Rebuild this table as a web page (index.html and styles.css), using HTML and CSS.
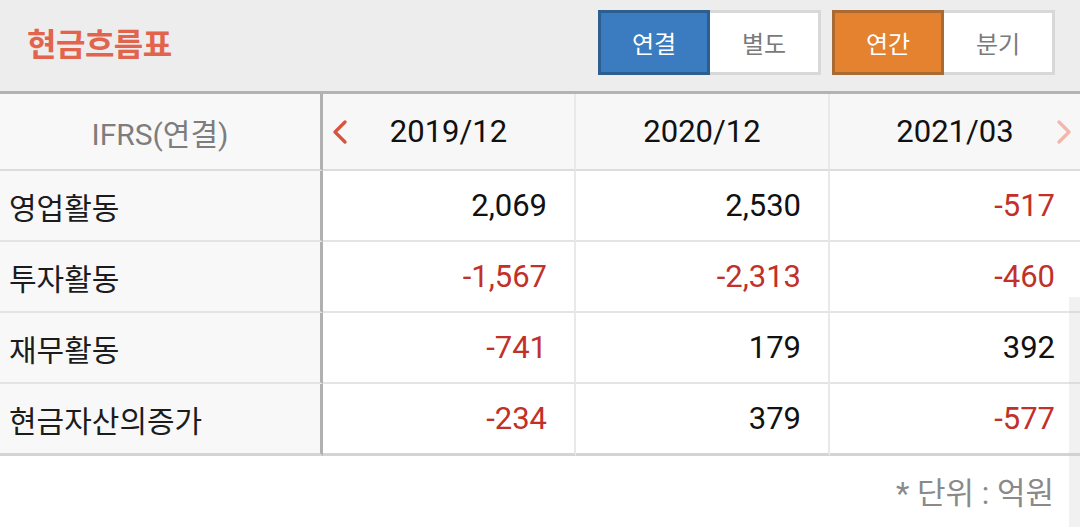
FILE: index.html
```html
<!DOCTYPE html>
<html lang="ko">
<head>
<meta charset="utf-8">
<title>현금흐름표</title>
<link rel="stylesheet" href="styles.css">
</head>
<body>
<div class="page">
  <header class="top">
    <h1 class="title">현금흐름표</h1>
    <div class="toggles">
      <div class="seg">
        <span class="btn btn-blue">연결</span>
        <span class="btn btn-off">별도</span>
      </div>
      <div class="seg">
        <span class="btn btn-orange">연간</span>
        <span class="btn btn-off">분기</span>
      </div>
    </div>
  </header>

  <div class="grid">
    <div class="cell head label-col ifrs">IFRS(연결)</div>
    <div class="cell head num-head">
      <svg class="chev chev-left" width="16" height="24" viewBox="0 0 16 24"><path d="M13 2 L3 12 L13 22" fill="none" stroke="#d6553d" stroke-width="3.2" stroke-linecap="round" stroke-linejoin="round"/></svg>
      2019/12
    </div>
    <div class="cell head num-head">2020/12</div>
    <div class="cell head num-head last">
      2021/03
      <svg class="chev chev-right" width="16" height="24" viewBox="0 0 16 24"><path d="M3 2 L13 12 L3 22" fill="none" stroke="#f2b7aa" stroke-width="3.2" stroke-linecap="round" stroke-linejoin="round"/></svg>
    </div>

    <div class="cell label-col">영업활동</div>
    <div class="cell num">2,069</div>
    <div class="cell num">2,530</div>
    <div class="cell num last neg">-517</div>

    <div class="cell label-col">투자활동</div>
    <div class="cell num neg">-1,567</div>
    <div class="cell num neg">-2,313</div>
    <div class="cell num last neg">-460</div>

    <div class="cell label-col">재무활동</div>
    <div class="cell num neg">-741</div>
    <div class="cell num">179</div>
    <div class="cell num last">392</div>

    <div class="cell label-col end">현금자산의증가</div>
    <div class="cell num neg end">-234</div>
    <div class="cell num end">379</div>
    <div class="cell num last neg end">-577</div>
  </div>

  <p class="unit">* 단위 : 억원</p>
  <div class="scroll-track"></div>
</div>
</body>
</html>
```

FILE: styles.css
```css
html, body {
  margin: 0;
  padding: 0;
  background: #ffffff;
}

body {
  font-family: Roboto, "Noto Sans CJK KR", sans-serif;
  color: #1a1a1a;
}

.page {
  position: relative;
  width: 1080px;
  height: 527px;
  overflow: hidden;
}

.top {
  height: 91px;
  background: #ededed;
  display: flex;
  align-items: flex-start;
  justify-content: space-between;
  padding: 0 25px 0 27px;
  box-sizing: border-box;
}

.title {
  margin: 0;
  padding-top: 20px;
  font-family: "Noto Sans CJK KR", sans-serif;
  font-size: 32px;
  font-weight: 700;
  line-height: 44px;
  color: #e2644c;
  letter-spacing: -0.5px;
}

.toggles {
  display: flex;
  gap: 11px;
  padding-top: 10px;
}

.seg {
  display: flex;
}

.btn {
  width: 111px;
  height: 65px;
  box-sizing: border-box;
  display: flex;
  align-items: center;
  justify-content: center;
  font-family: "Noto Sans CJK KR", sans-serif;
  font-size: 24px;
  border: 3px solid #d8d8d8;
  background: #ffffff;
  color: #7a7a7a;
}

.btn-blue {
  background: #3a7cbf;
  border-color: #2d5e90;
  color: #ffffff;
  width: 112px;
}

.btn-orange {
  background: #e4822f;
  border-color: #a96b33;
  color: #ffffff;
  width: 112px;
}

.btn-off {
  border-left: 0;
}

.grid {
  display: grid;
  grid-template-columns: 323px 253px 254px 250px;
  border-top: 3px solid #b3b3b3;
}

.cell {
  box-sizing: border-box;
  height: 71px;
  display: flex;
  align-items: center;
  border-bottom: 2px solid #e4e4e4;
  border-right: 2px solid #e9e9e9;
  background: #ffffff;
}

.cell.last {
  border-right: 0;
}

.head {
  height: 77px;
  background: #f7f7f7;
  border-bottom: 2px solid #dcdcdc;
  position: relative;
}

.label-col {
  background: #f8f8f8;
  border-right: 3px solid #b0b0b0;
  font-family: "Noto Sans CJK KR", sans-serif;
  font-size: 30px;
  padding-left: 9px;
  color: #1c1c1c;
}

.ifrs {
  justify-content: center;
  padding-left: 0;
  color: #7d7d7d;
  font-family: Roboto, "Noto Sans CJK KR", sans-serif;
  font-size: 30px;
}

.num-head {
  justify-content: center;
  font-size: 31px;
  color: #111111;
}

.num {
  justify-content: flex-end;
  padding-right: 27px;
  font-size: 31px;
  color: #111111;
}

.num.last {
  padding-right: 25px;
}

.neg {
  color: #c2302a;
}

.end {
  border-bottom: 3px solid #d4d4d4;
  height: 72px;
}

.chev {
  position: absolute;
  top: 26px;
}

.chev-left {
  left: 9px;
}

.chev-right {
  right: 8px;
}

.unit {
  margin: 0;
  text-align: right;
  padding: 16px 26px 0 0;
  font-family: Roboto, "Noto Sans CJK KR", sans-serif;
  font-size: 31px;
  line-height: 44px;
  color: #8a8a8a;
}

.scroll-track {
  position: absolute;
  right: 0;
  top: 297px;
  width: 11px;
  bottom: 0;
  background: rgba(200, 200, 200, 0.25);
}
```
